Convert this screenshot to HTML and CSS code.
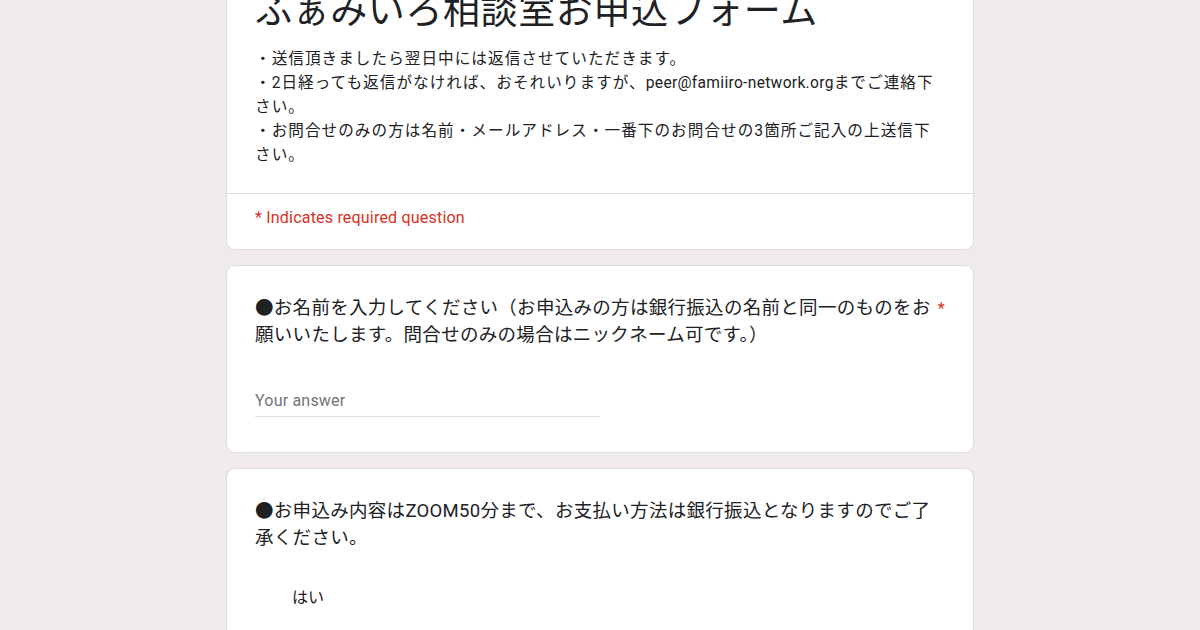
FILE: index.html
```html
<!DOCTYPE html>
<html lang="ja">
<head>
<meta charset="utf-8">
<title>ふぁみいろ相談室お申込フォーム</title>
<link rel="stylesheet" href="styles.css">
</head>
<body>
<main class="form">
  <section class="card card-header">
    <div class="header-body">
      <h1 class="form-title">ふぁみいろ相談室お申込フォーム</h1>
      <div class="form-desc">
        <p>・送信頂きましたら翌日中には返信させていただきます。</p>
        <p>・2日経っても返信がなければ、おそれいりますが、<span class="latin">peer@famiiro-network.org</span>までご連絡下さい。</p>
        <p>・お問合せのみの方は名前・メールアドレス・一番下のお問合せの3箇所ご記入の上送信下さい。</p>
      </div>
    </div>
    <div class="required-note">* Indicates required question</div>
  </section>

  <section class="card question">
    <div class="q-title">
      <span class="q-text">●お名前を入力してください（お申込みの方は銀行振込の名前と同一のものをお願いいたします。問合せのみの場合はニックネーム可です。）</span>
      <span class="q-star">*</span>
    </div>
    <div class="answer">
      <div class="answer-input">Your answer</div>
    </div>
  </section>

  <section class="card question">
    <div class="q-title">
      <span class="q-text">●お申込み内容はZOOM50分まで、お支払い方法は銀行振込となりますのでご了承ください。</span>
    </div>
    <div class="options">
      <div class="option">はい</div>
    </div>
  </section>
</main>
</body>
</html>
```

FILE: styles.css
```css
html, body {
  margin: 0;
  padding: 0;
}

body {
  background: #f0ebea;
  font-family: Roboto, "Noto Sans CJK JP", sans-serif;
  color: #202124;
}

.form {
  width: 748px;
  margin: -45px auto 0;
  display: flex;
  flex-direction: column;
  gap: 15px;
}

.card {
  background: #fff;
  border: 1px solid #dadce0;
  border-radius: 9px;
  box-sizing: border-box;
}

.header-body {
  padding: 29px 28px 26px;
  border-bottom: 1px solid #dadce0;
}

.form-title {
  margin: 0;
  font-family: "Noto Sans CJK JP", sans-serif;
  font-weight: 400;
  font-size: 37px;
  line-height: 47px;
  letter-spacing: 0.6px;
}

.form-desc {
  margin-top: 15px;
  font-size: 15.6px;
  line-height: 24px;
  letter-spacing: 1.05px;
}

.form-desc p {
  margin: 0;
}

.latin {
  letter-spacing: 0.3px;
}

.required-note {
  padding: 12px 28px 19px;
  font-size: 16px;
  line-height: 24px;
  letter-spacing: 0.2px;
  color: #d93025;
}

.question {
  padding: 29px 28px 35px;
}

.q-title {
  display: flex;
  gap: 3px;
  font-size: 18.5px;
  line-height: 27px;
  letter-spacing: 0.3px;
}

.q-text {
  flex: 1;
}

.q-star {
  color: #d93025;
  font-size: 16px;
}

.answer {
  margin-top: 40px;
}

.answer-input {
  width: 50%;
  font-size: 16px;
  line-height: 24px;
  letter-spacing: 0.2px;
  color: #70757a;
  padding-bottom: 3px;
  border-bottom: 1px solid #e0e0e0;
}

.options {
  margin-top: 34px;
}

.option {
  padding-left: 37px;
  font-size: 16px;
  line-height: 24px;
}
```
